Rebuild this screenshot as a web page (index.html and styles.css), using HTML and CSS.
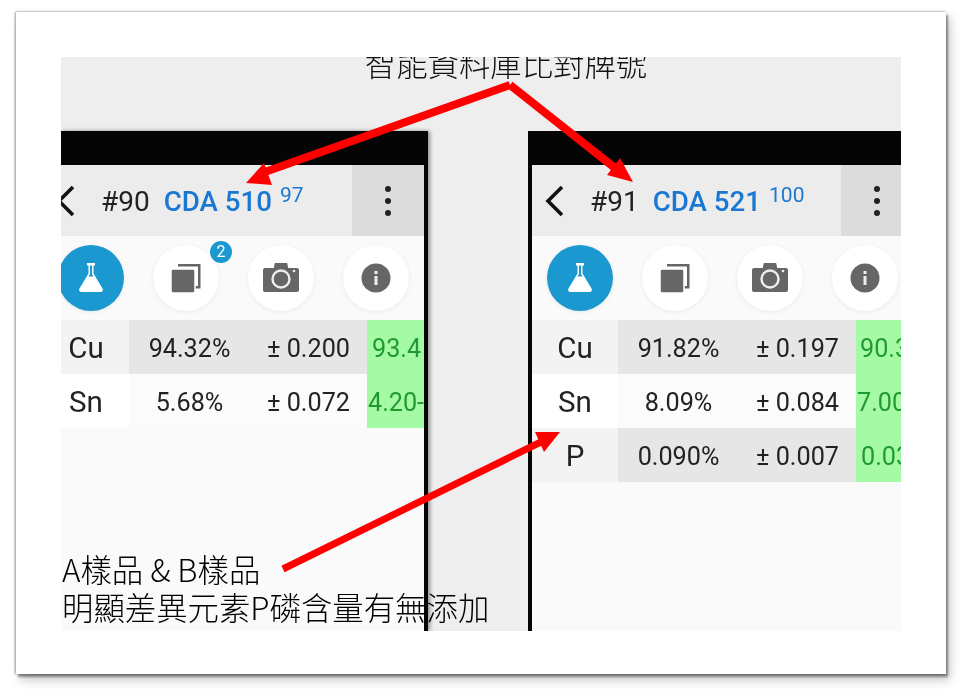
FILE: index.html
```html
<!DOCTYPE html>
<html lang="zh-Hant">
<head>
    <meta charset="UTF-8">
    <meta name="viewport" content="width=device-width, initial-scale=1.0">
    <title>智能資料庫比對牌號</title>
    <link rel="stylesheet" href="styles.css">
</head>
<body>
    <svg class="defs" width="0" height="0">
        <symbol id="icon-flask" viewBox="0 0 40 40">
            <path d="M16 5h8v2.500h-1.500v8l9 15c1 1.800 0 3.500-2 3.500H10.500c-2 0-3-1.700-2-3.500l9-15v-8H16z" fill="#fff"/>
            <path d="M19 7.500h2v8.500l1.500 2.500h-5L19 16z" fill="#1a98cf"/>
        </symbol>
        <symbol id="icon-copy" viewBox="0 0 40 40">
            <path d="M12 6h22.500v24.500H28V28h4V8.500H12z" fill="#666"/>
            <rect x="5" y="11" width="24" height="24" rx="2" fill="#666" stroke="#fff" stroke-width="1.500"/>
        </symbol>
        <symbol id="icon-camera" viewBox="0 0 40 40">
            <path d="M8 10h4l1-4.500c.1-.4.500-.5.800-.5h12.400c.3 0 .7.100.8.500L28 10h10c1 0 2 1 2 2v20c0 1-1 2-2 2H2c-1 0-2-1-2-2V12c0-1 1-2 2-2z" fill="#666" transform="translate(2 0) scale(.9 1)"/>
            <circle cx="20" cy="21" r="8.500" fill="none" stroke="#eee" stroke-width="2.400"/>
            <circle cx="33" cy="13" r="1.300" fill="#eee"/>
        </symbol>
        <symbol id="icon-info" viewBox="0 0 40 40">
            <circle cx="20" cy="20" r="14.500" fill="#666"/>
            <rect x="18.500" y="18" width="3" height="9" fill="#eee"/>
            <rect x="18.500" y="13" width="3" height="3" fill="#eee"/>
        </symbol>
    </svg>

    <div class="slide">
        <div class="shot">
            <div class="top-note">智能資料庫比對牌號</div>

            <div class="phones">
                <!-- 樣品 A -->
                <div class="phone phone-left">
                    <div class="status"></div>
                    <div class="screen screen-cropped">
                        <div class="header">
                            <svg class="back" width="20" height="34" viewBox="0 0 20 34"><path d="M17 3L3 17l14 14" fill="none" stroke="#111" stroke-width="3.600"/></svg>
                            <span class="num">#90</span>
                            <span class="grade">CDA 510</span>
                            <sup class="score">97</sup>
                            <div class="menu"><i></i><i></i><i></i></div>
                        </div>
                        <div class="chips">
                            <div class="chip chip-on"><svg width="40" height="40"><use href="#icon-flask"/></svg></div>
                            <div class="chip"><svg width="40" height="40"><use href="#icon-copy"/></svg><span class="badge">2</span></div>
                            <div class="chip"><svg width="40" height="40"><use href="#icon-camera"/></svg></div>
                            <div class="chip"><svg width="40" height="40"><use href="#icon-info"/></svg></div>
                        </div>
                        <div class="row row-dark">
                            <div class="el">Cu</div><div class="val">94.32%</div><div class="val">± 0.200</div>
                            <div class="spec spec-5">93.4</div>
                        </div>
                        <div class="row">
                            <div class="el">Sn</div><div class="val">5.68%</div><div class="val">± 0.072</div>
                            <div class="spec spec-1">4.20-</div>
                        </div>
                    </div>
                </div>

                <!-- 樣品 B -->
                <div class="phone phone-right">
                    <div class="status"></div>
                    <div class="screen">
                        <div class="header">
                            <svg class="back" width="20" height="34" viewBox="0 0 20 34"><path d="M17 3L3 17l14 14" fill="none" stroke="#111" stroke-width="3.600"/></svg>
                            <span class="num">#91</span>
                            <span class="grade">CDA 521</span>
                            <sup class="score">100</sup>
                            <div class="menu"><i></i><i></i><i></i></div>
                        </div>
                        <div class="chips">
                            <div class="chip chip-on"><svg width="40" height="40"><use href="#icon-flask"/></svg></div>
                            <div class="chip"><svg width="40" height="40"><use href="#icon-copy"/></svg></div>
                            <div class="chip"><svg width="40" height="40"><use href="#icon-camera"/></svg></div>
                            <div class="chip"><svg width="40" height="40"><use href="#icon-info"/></svg></div>
                        </div>
                        <div class="row row-dark">
                            <div class="el">Cu</div><div class="val">91.82%</div><div class="val">± 0.197</div>
                            <div class="spec spec-4">90.3</div>
                        </div>
                        <div class="row">
                            <div class="el">Sn</div><div class="val">8.09%</div><div class="val">± 0.084</div>
                            <div class="spec spec-1">7.00</div>
                        </div>
                        <div class="row row-dark">
                            <div class="el">P</div><div class="val">0.090%</div><div class="val">± 0.007</div>
                            <div class="spec spec-5">0.03</div>
                        </div>
                    </div>
                </div>
            </div>

            <div class="bottom-note">A樣品 &amp; B樣品<br>明顯差異元素P磷含量有無添加</div>
        </div>

        <!-- 紅色箭頭 -->
        <svg class="arrows" width="930" height="662" viewBox="16 12 930 662">
            <path d="M510 85L262 173M510 85L620 172" fill="none" stroke="#f00" stroke-width="8"/>
            <path d="M246 183L264 163L272 185z" fill="#f00"/>
            <path d="M633 182L620 158L607 175z" fill="#f00"/>
            <path d="M283 569L545 440" fill="none" stroke="#f00" stroke-width="7"/>
            <path d="M560 432L535 432L544 452z" fill="#f00"/>
        </svg>
    </div>
</body>
</html>
```

FILE: styles.css
```css
/* Geral */
body {
    box-sizing: border-box;
    min-height: 100vh;
    margin: 0;
    padding: 12px 0 0 16px;
    background: #fff;
    font-family: Roboto, "Liberation Sans", sans-serif;
    color: #222;
}

.defs {
    position: absolute;
}

.slide {
    position: relative;
    box-sizing: border-box;
    width: 930px;
    height: 662px;
    padding: 45px;
    background: #fff;
    box-shadow: 2px 3px 2px rgba(0, 0, 0, 0.38), 4px 6px 10px rgba(0, 0, 0, 0.22), -1px 0 2px rgba(0, 0, 0, 0.35), 0 -1px 2px rgba(0, 0, 0, 0.1);
}

.shot {
    position: relative;
    display: flex;
    flex-direction: column;
    height: 574px;
    background: #eee;
    overflow: hidden;
    filter: blur(0.4px);
}

.arrows {
    position: absolute;
    left: 0;
    top: 0;
}

/* Legendas */
.top-note {
    flex: none;
    height: 74px;
    padding-left: 50px;
    text-align: center;
    font-family: "Noto Sans CJK TC", sans-serif;
    font-size: 31.4px;
    font-weight: 300;
    line-height: 11px;
    white-space: nowrap;
    color: #111;
}

.bottom-note {
    position: absolute;
    left: 1px;
    bottom: 5px;
    font-family: "Noto Sans CJK TC", sans-serif;
    font-size: 31.4px;
    font-weight: 300;
    line-height: 38px;
    white-space: nowrap;
    color: #000;
}

/* Telefones */
.phones {
    flex: 1;
    display: flex;
    justify-content: space-between;
}

.phone {
    display: flex;
    flex-direction: column;
    box-sizing: border-box;
    overflow: hidden;
}

.phone-left {
    width: 367px;
    border-right: 4px solid #050505;
    box-shadow: 2px 0 4px rgba(0, 0, 0, 0.4);
}

.phone-right {
    width: 373px;
    border-left: 4px solid #050505;
}

.status {
    flex: none;
    height: 34px;
    background: #050505;
}

.screen {
    flex: 1;
    width: 381px;
    background: #fafafa;
}

.screen-cropped {
    margin-left: -18px;
}

.header {
    display: flex;
    align-items: center;
    height: 71px;
    padding-top: 2px;
    box-sizing: border-box;
    background: #ececec;
}

.back {
    margin-left: 13px;
    margin-top: -2px;
}

.num {
    margin-left: 25px;
    font-size: 28px;
    color: #222;
}

.grade {
    margin-left: 14px;
    font-size: 27.7px;
    font-weight: 500;
    color: #1a78d2;
}

.score {
    margin: -14px 0 0 8px;
    font-size: 21px;
    color: #1a78d2;
}

.menu {
    margin-left: auto;
    margin-top: -2px;
    flex: none;
    display: flex;
    flex-direction: column;
    align-items: center;
    justify-content: center;
    gap: 6px;
    width: 72px;
    height: 71px;
    background: #dcdcdc;
}

.menu i {
    width: 6px;
    height: 6px;
    border-radius: 50%;
    background: #222;
}

.chips {
    display: flex;
    gap: 29px;
    height: 84px;
    box-sizing: border-box;
    padding: 9px 0 9px 15px;
}

.chip {
    position: relative;
    flex: none;
    display: flex;
    align-items: center;
    justify-content: center;
    width: 66px;
    height: 66px;
    border-radius: 50%;
    background: #fff;
    box-shadow: 0 1px 4px rgba(0, 0, 0, 0.07);
}

.chip-on {
    background: #1a98cf;
}

.badge {
    position: absolute;
    top: -4px;
    right: -13px;
    width: 22px;
    height: 22px;
    border-radius: 50%;
    background: #1a98cf;
    color: #fff;
    font-size: 16px;
    line-height: 22px;
    text-align: center;
}

/* Tabela */
.row {
    display: grid;
    grid-template-columns: 86px 119px 119px 57px;
    height: 54px;
    font-size: 25.2px;
    color: #222;
    white-space: nowrap;
    background: #fbfbfb;
}

.row-dark {
    background: #e6e6e6;
}

.row > div {
    box-sizing: border-box;
    height: 54px;
    padding-top: 3px;
    line-height: 51px;
}

.el {
    text-align: center;
    font-size: 29.5px;
    background: #fff;
}

.row-dark .el {
    background: #f3f3f3;
}

.val {
    padding-left: 2px;
    text-align: center;
}

.spec {
    background: #a5fba5;
    color: #1f9a2f;
    overflow: hidden;
}

.spec-1 {
    padding-left: 1px;
}

.spec-4 {
    padding-left: 4px;
}

.spec-5 {
    padding-left: 5px;
}
```
